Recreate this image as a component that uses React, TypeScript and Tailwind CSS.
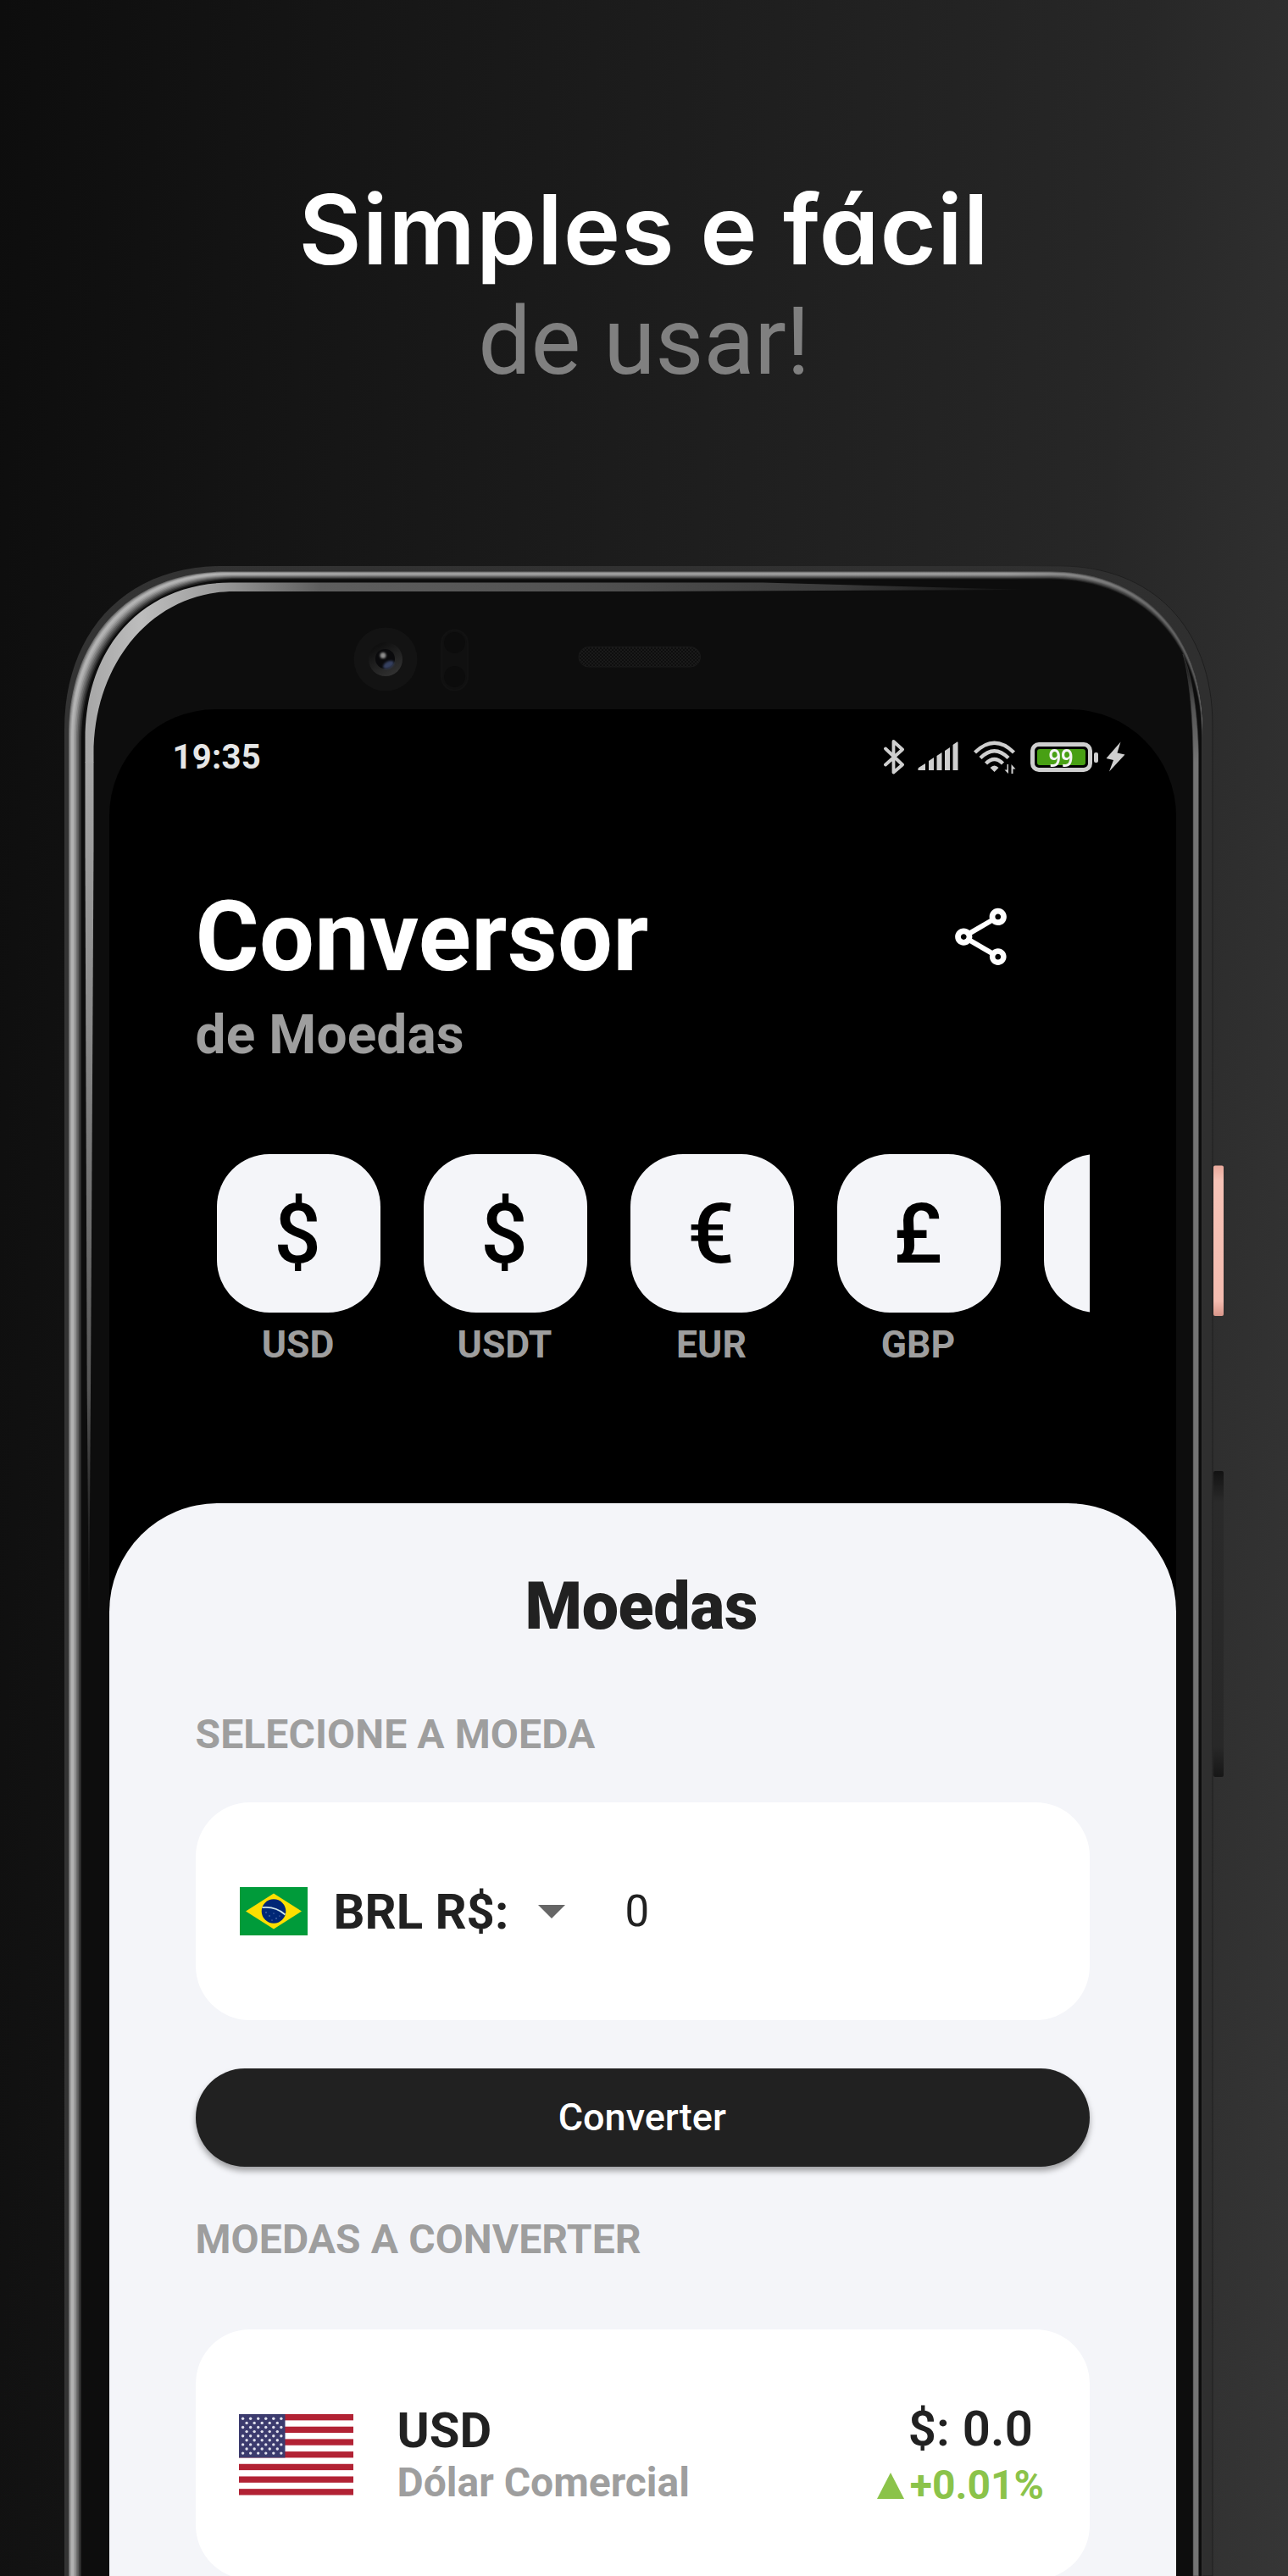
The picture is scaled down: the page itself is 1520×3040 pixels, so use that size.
import React from "react";

/** Outline of the phone body for a given left, top and right edge. */
const body = (l: number, t: number, r: number) =>
  `M${l} 3040 V${t + 193} C${l} ${t + 75} ${l + 75} ${t} ${l + 186} ${t} H${r - 180} C${r - 72} ${t} ${r} ${t + 72} ${r} ${t + 188} V3040 Z`;

const rim: [number, string][] = [
  [0, "#6f6f6f"],
  [0.07, "#8c8c8c"],
  [0.14, "#a2a2a2"],
  [0.21, "#b4b4b4"],
  [0.3, "#b0b0b0"],
  [0.4, "#a0a0a0"],
  [0.5, "#8a8a8a"],
  [0.6, "#727272"],
  [0.7, "#5a5a5a"],
  [0.8, "#404040"],
  [0.9, "#272727"],
];

function PhoneBody() {
  return (
    <svg className="absolute left-0 top-0" width="1520" height="3040" viewBox="0 0 1520 3040" aria-hidden="true">
      <defs>
        <linearGradient id="shade" gradientUnits="userSpaceOnUse" x1="260" y1="0" x2="1420" y2="0">
          <stop offset="0" stopColor="#000" stopOpacity="0" />
          <stop offset="0.15" stopColor="#000" stopOpacity="0.08" />
          <stop offset="0.8" stopColor="#000" stopOpacity="0.12" />
          <stop offset="1" stopColor="#000" stopOpacity="0.5" />
        </linearGradient>
        <linearGradient id="outer" gradientUnits="userSpaceOnUse" x1="76" y1="0" x2="1432" y2="0">
          <stop offset="0" stopColor="#333333" />
          <stop offset="1" stopColor="#2f2f2f" />
        </linearGradient>
        <linearGradient id="edge" gradientUnits="userSpaceOnUse" x1="1200" y1="0" x2="1300" y2="0">
          <stop offset="0" stopColor="#1c1c1c" stopOpacity="0" />
          <stop offset="1" stopColor="#1c1c1c" stopOpacity="0.9" />
        </linearGradient>
        <linearGradient id="glintTop" gradientUnits="userSpaceOnUse" x1="100" y1="0" x2="1215" y2="0">
          <stop offset="0" stopColor="#a6a6a6" />
          <stop offset="0.06" stopColor="#bdbdbd" />
          <stop offset="0.13" stopColor="#a0a0a0" />
          <stop offset="0.25" stopColor="#5e5e5e" />
          <stop offset="0.52" stopColor="#525252" />
          <stop offset="0.8" stopColor="#3a3a3a" />
          <stop offset="1" stopColor="#0d0d0d" />
        </linearGradient>
        <linearGradient id="glintLeft" gradientUnits="userSpaceOnUse" x1="0" y1="900" x2="0" y2="1930">
          <stop offset="0" stopColor="#a6a6a6" />
          <stop offset="0.3" stopColor="#8a8a8a" />
          <stop offset="0.72" stopColor="#555555" />
          <stop offset="0.87" stopColor="#262626" />
          <stop offset="1" stopColor="#0d0d0d" />
        </linearGradient>
        <linearGradient id="glintRight" gradientUnits="userSpaceOnUse" x1="0" y1="772" x2="0" y2="900">
          <stop offset="0" stopColor="#0d0d0d" />
          <stop offset="0.5" stopColor="#555555" />
          <stop offset="1" stopColor="#747474" />
        </linearGradient>
        <linearGradient id="lensRing" x1="0" y1="0" x2="0.6" y2="1">
          <stop offset="0.2" stopColor="#101010" />
          <stop offset="1" stopColor="#303030" />
        </linearGradient>
        <linearGradient id="power" x1="0" y1="0" x2="0" y2="1">
          <stop offset="0" stopColor="#eaa99c" />
          <stop offset="0.1" stopColor="#f6c3b7" />
          <stop offset="0.9" stopColor="#f4bcb0" />
          <stop offset="1" stopColor="#d8968a" />
        </linearGradient>
        <linearGradient id="volume" x1="0" y1="0" x2="0" y2="1">
          <stop offset="0" stopColor="#121212" />
          <stop offset="0.1" stopColor="#2a2a2a" />
          <stop offset="0.9" stopColor="#282828" />
          <stop offset="1" stopColor="#161616" />
        </linearGradient>
        <pattern id="mesh" width="4" height="4" patternUnits="userSpaceOnUse">
          <rect width="4" height="4" fill="#1a1a1a" />
          <rect width="2" height="2" fill="#0e0e0e" />
          <rect x="2" y="2" width="2" height="2" fill="#0e0e0e" />
        </pattern>
        <filter id="soft" x="-50%" y="-50%" width="200%" height="200%">
          <feGaussianBlur stdDeviation="1.2" />
        </filter>
      </defs>

      <rect x="1432" y="1375.500" width="12" height="177.500" rx="2" fill="url(#power)" />
      <rect x="1432" y="1736" width="12" height="361" rx="2" fill="url(#volume)" />

      <path d={body(76, 668, 1431)} fill="url(#outer)" stroke="url(#edge)" strokeWidth="1" />
      {rim.map(([k, color]) => (
        <path key={k} d={body(81 + 15 * k, 674.5 + 9 * k, 1419 - k)} fill={color} />
      ))}
      <path d={body(81, 674.5, 1419)} fill="url(#shade)" />
      <path d={body(96, 683.5, 1418)} fill="#0d0d0d" />

      <path
        d="M100.500 900 V872 C100.500 762 170 687.500 272 687.500 H900 L1215 696 L760 698 H276 C182 698 110.500 780 110.500 890 V900 Z"
        fill="url(#glintTop)"
      />
      <path d="M100.500 899.500 L100.500 1000 L102.700 1640 L105 1930 L107 1640 L110.500 1000 V899.500 Z" fill="url(#glintLeft)" />
      <path
        d="M1396 772 C1404 800 1408 850 1408 900 V3040 H1414.500 V890 C1414 850 1408 800 1396 772 Z"
        fill="url(#glintRight)"
        stroke="#3c3c3c"
        strokeOpacity="0.6"
      />

      <circle cx="455" cy="778" r="37.500" fill="#131313" />
      <circle cx="455" cy="778" r="20" fill="url(#lensRing)" />
      <circle cx="454.500" cy="777.500" r="11.500" fill="#0a0a0c" />
      <ellipse cx="458.500" cy="784.500" rx="7" ry="4" transform="rotate(-28 458.500 784.500)" fill="#36405f" filter="url(#soft)" />
      <circle cx="452" cy="773.500" r="3.500" fill="#8e8e8e" filter="url(#soft)" />
      <rect x="521" y="743.500" width="31" height="71" rx="15.500" fill="#101010" stroke="#121212" strokeWidth="2" />
      <circle cx="536.500" cy="758.500" r="12.500" fill="#0c0c0c" />
      <circle cx="536.500" cy="798.500" r="12.500" fill="#0c0c0c" />
      <rect x="683" y="763.500" width="143.500" height="23.500" rx="11.700" fill="url(#mesh)" stroke="#1a1a1a" />
    </svg>
  );
}

function StatusBar() {
  return (
    <div className="flex h-12 shrink-0 items-center justify-between pl-[75px] pr-[60px] pt-px text-[#cfcfcf]">
      <span className="text-[40px] font-bold leading-[48px] tracking-[0.3px] text-[#e6e6e6]">19:35</span>
      <div className="flex h-12 items-center">
        <svg width="24" height="48" viewBox="0 0 24 48" fill="none" stroke="currentColor" strokeWidth="3.800" strokeLinejoin="round" strokeLinecap="round">
          <path d="M2 13.500 L22 32.500 L11.500 41.500 V5 L22 14.500 L2 32.500" />
        </svg>
        <svg className="ml-4" width="48" height="48" viewBox="0 0 48 48" fill="currentColor">
          <path d="M1 36 L9 31 V39 H0.500 Q0 37 1 36Z M13 28 L19 24 V39 H13Z M22.500 22 L28.500 18 V39 H22.500Z M32 16 L38 12 V39 H32Z M41.500 9 L46.500 5.500 Q47.500 5 47.500 6.500 V39 H41.500Z" />
        </svg>
        <svg className="ml-[18px]" width="50" height="48" viewBox="0 0 50 48">
          <g fill="none" stroke="currentColor" strokeWidth="4.400">
            <path d="M1.500 18 Q24.500 -4.500 47.500 18" />
            <path d="M8 24.500 Q24.500 8 41 24.500" />
            <path d="M14.500 31 Q24.500 21 34.500 31" />
          </g>
          <path d="M19.500 36 Q24.500 31 29.500 36 L24.500 41 Z" fill="currentColor" />
          <path d="M41 32 V43 L36.500 38.500 H39.500 V32Z M44.500 43 V32 L49.500 37.500 H46.500 V43Z" fill="currentColor" />
        </svg>
        <div className="ml-[17px] flex h-[35px] w-[73px] rounded-[10px] border-[5px] border-[#cfcfcf] p-[3px]">
          <div className="flex flex-1 items-center justify-center rounded-[3px] bg-[#48a014]">
            <span className="scale-x-90 font-['Noto_Sans'] text-[28px] font-semibold leading-none text-[#f4f4f4]">99</span>
          </div>
        </div>
        <div className="ml-0.5 h-3 w-[5px] rounded-[2px] bg-[#cfcfcf]" />
        <svg className="ml-[9px]" width="23" height="48" viewBox="0 0 23 48" fill="currentColor">
          <path d="M17.500 5.500 L0.500 25 L9 27 L4 40.500 L22.500 20.500 L13.500 18.500 Z" />
        </svg>
      </div>
    </div>
  );
}

const coins = [
  { symbol: "$", code: "USD" },
  { symbol: "$", code: "USDT" },
  { symbol: "€", code: "EUR" },
  { symbol: "£", code: "GBP" },
  { symbol: "", code: "" },
];

function CoinList() {
  return (
    <div className="mx-[102px] mt-[102px] flex shrink-0 gap-[51px] overflow-hidden pl-[25px]">
      {coins.map((c, i) => (
        <div key={i} className="flex w-[193px] shrink-0 flex-col items-center gap-3">
          <div className="flex h-[187px] w-full shrink-0 items-center justify-center rounded-[62px] bg-[#f4f5f9] pr-0.5 pt-[3px] text-[98px] font-medium leading-none text-black">
            {c.symbol}
          </div>
          <span className="h-[52px] pr-px text-[44.500px] font-bold leading-[52px] text-[#9e9e9e]">{c.code}</span>
        </div>
      ))}
    </div>
  );
}

function BrazilFlag() {
  return (
    <svg width="80" height="57" viewBox="0 0 80 57">
      <rect width="80" height="57" fill="#009b3a" />
      <path d="M40 7.500 L73 28.500 L40 49.500 L7 28.500 Z" fill="#fedf00" />
      <circle cx="40" cy="28.500" r="14.300" fill="#002776" />
      <path d="M26.500 24.200 Q42 22.500 53.500 32.500" fill="none" stroke="#cfe6ea" strokeWidth="1.800" />
      <g fill="#8fa3cf">
        <circle cx="31" cy="30" r="0.700" />
        <circle cx="35" cy="34" r="0.700" />
        <circle cx="40" cy="31" r="0.600" />
        <circle cx="43" cy="37" r="0.700" />
        <circle cx="47" cy="34" r="0.600" />
        <circle cx="38" cy="39" r="0.600" />
      </g>
    </svg>
  );
}

function UsaFlag() {
  const stripe = 95.5 / 13;
  const stars: [number, number][] = [];
  for (let row = 0; row < 9; row++) {
    const n = row % 2 === 0 ? 6 : 5;
    for (let i = 0; i < n; i++) {
      stars.push([(row % 2 === 0 ? 4.6 : 9.1) + i * 9.05, 5.3 + row * 5.1]);
    }
  }
  return (
    <svg width="135" height="96" viewBox="0 0 135 96">
      <rect width="135" height="95.500" fill="#ffffff" />
      {[0, 2, 4, 6, 8, 10, 12].map((i) => (
        <rect key={i} y={i * stripe} width="135" height={stripe} fill="#b22234" />
      ))}
      <rect width="54.500" height={stripe * 7} fill="#3c3b6e" />
      {stars.map(([x, y]) => (
        <circle key={`${x}-${y}`} cx={x} cy={y} r="1.700" fill="#e2e2ee" />
      ))}
    </svg>
  );
}

export default function App() {
  return (
    <div className="relative flex h-[3040px] w-[1520px] flex-col overflow-hidden bg-[linear-gradient(94deg,#0d0d0d_0%,#151515_22%,#272727_78%,#363636_100%)] font-['Roboto',sans-serif]">
      <PhoneBody />

      <header className="relative h-[837px] shrink-0 pt-[211px] text-center">
        <h1 className="whitespace-nowrap font-['Inter'] text-[114px] font-semibold leading-[120px] tracking-[0.9px] text-white [font-feature-settings:'cv11']">
          Simples e fácil
        </h1>
        <p className="mt-3 text-[111px] leading-[120px] tracking-[-0.3px] text-[#808080]">de usar!</p>
      </header>

      <main className="relative ml-[128.500px] flex w-[1259.500px] flex-1 flex-col overflow-hidden rounded-t-[126px] bg-black pt-8">
        <StatusBar />

        <div className="mt-[120px] flex shrink-0 justify-between pl-[102px] pr-[190px]">
          <h2 className="pt-px text-[115px] font-bold leading-[136px] tracking-[0.3px] text-white">Conversor</h2>
          <svg className="mt-7" width="81" height="81" viewBox="0 0 24 24" fill="#fff">
            <path d="M18 16.080c-.76 0-1.440.3-1.960.77L8.910 12.700c.05-.23.09-.46.09-.7s-.04-.47-.09-.7l7.050-4.110c.54.5 1.250.81 2.040.81 1.660 0 3-1.340 3-3s-1.340-3-3-3-3 1.340-3 3c0 .24.04.47.09.7L8.040 9.810C7.500 9.310 6.790 9 6 9c-1.660 0-3 1.340-3 3s1.340 3 3 3c.79 0 1.500-.31 2.040-.81l7.120 4.160c-.05.21-.08.43-.08.65 0 1.610 1.310 2.920 2.920 2.920s2.920-1.310 2.920-2.920-1.310-2.920-2.920-2.920zM18 4c.55 0 1 .45 1 1s-.45 1-1 1-1-.45-1-1 .45-1 1-1zM6 13c-.55 0-1-.45-1-1s.45-1 1-1 1 .45 1 1-.45 1-1 1zm12 7.020c-.55 0-1-.45-1-1s.45-1 1-1 1 .45 1 1-.45 1-1 1z" />
          </svg>
        </div>
        <p className="mt-[10px] shrink-0 pl-[102px] text-[64px] font-bold leading-[76px] tracking-[0.1px] text-[#9e9e9e]">de Moedas</p>

        <CoinList />

        <section className="mt-[161px] flex h-[1400px] shrink-0 flex-col rounded-t-[128px] bg-[#f4f5f9] px-[102px] pt-[77px] text-[#212121]">
          <h3 className="pr-[3px] text-center text-[77px] font-black leading-[90px] tracking-[-0.3px]">Moedas</h3>
          <h4 className="mt-[78px] text-[48px] font-bold leading-[56px] tracking-[0.1px] text-[#9e9e9e]">SELECIONE A MOEDA</h4>

          <div className="mt-[52px] flex h-[257px] items-center rounded-[64px] bg-white pl-[52px]">
            <BrazilFlag />
            <span className="ml-[31px] w-[224px] whitespace-nowrap text-[58px] font-bold leading-[68px]">BRL R$:</span>
            <svg className="ml-[17px]" width="32" height="16" viewBox="0 0 32 16" fill="#666">
              <path d="M0 0 H32 L16 16 Z" />
            </svg>
            <span className="ml-[71px] text-[51px] leading-[60px]">0</span>
          </div>

          <button className="mt-[57px] h-[116px] w-full rounded-full bg-[#212121] pr-px text-[45px] font-medium text-white shadow-[0_5px_7px_rgba(0,0,0,0.35)]">
            Converter
          </button>

          <h4 className="mt-[58px] text-[48px] font-bold leading-[56px] tracking-[0.1px] text-[#9e9e9e]">MOEDAS A CONVERTER</h4>

          <div className="mt-[78px] flex h-[295px] items-center rounded-[64px] bg-white pl-[51px] pr-[54px]">
            <UsaFlag />
            <div className="ml-[52px]">
              <p className="text-[58px] font-bold leading-[66px]">USD</p>
              <p className="mt-px text-[48px] font-bold leading-[56px] text-[#9e9e9e]">Dólar Comercial</p>
            </div>
            <div className="ml-auto flex flex-col items-end pt-0.5">
              <p className="pr-[13px] text-[58px] font-semibold leading-[68px] tracking-[0.2px]">$: 0.0</p>
              <p className="mt-[3px] flex items-center text-[48px] font-bold leading-[60px] text-[#8bc34a]">
                <svg className="mr-[7px]" width="32" height="31" viewBox="0 0 32 31" fill="currentColor">
                  <path d="M16 0 L32 31 H0 Z" />
                </svg>
                +0.01%
              </p>
            </div>
          </div>
        </section>
      </main>
    </div>
  );
}
